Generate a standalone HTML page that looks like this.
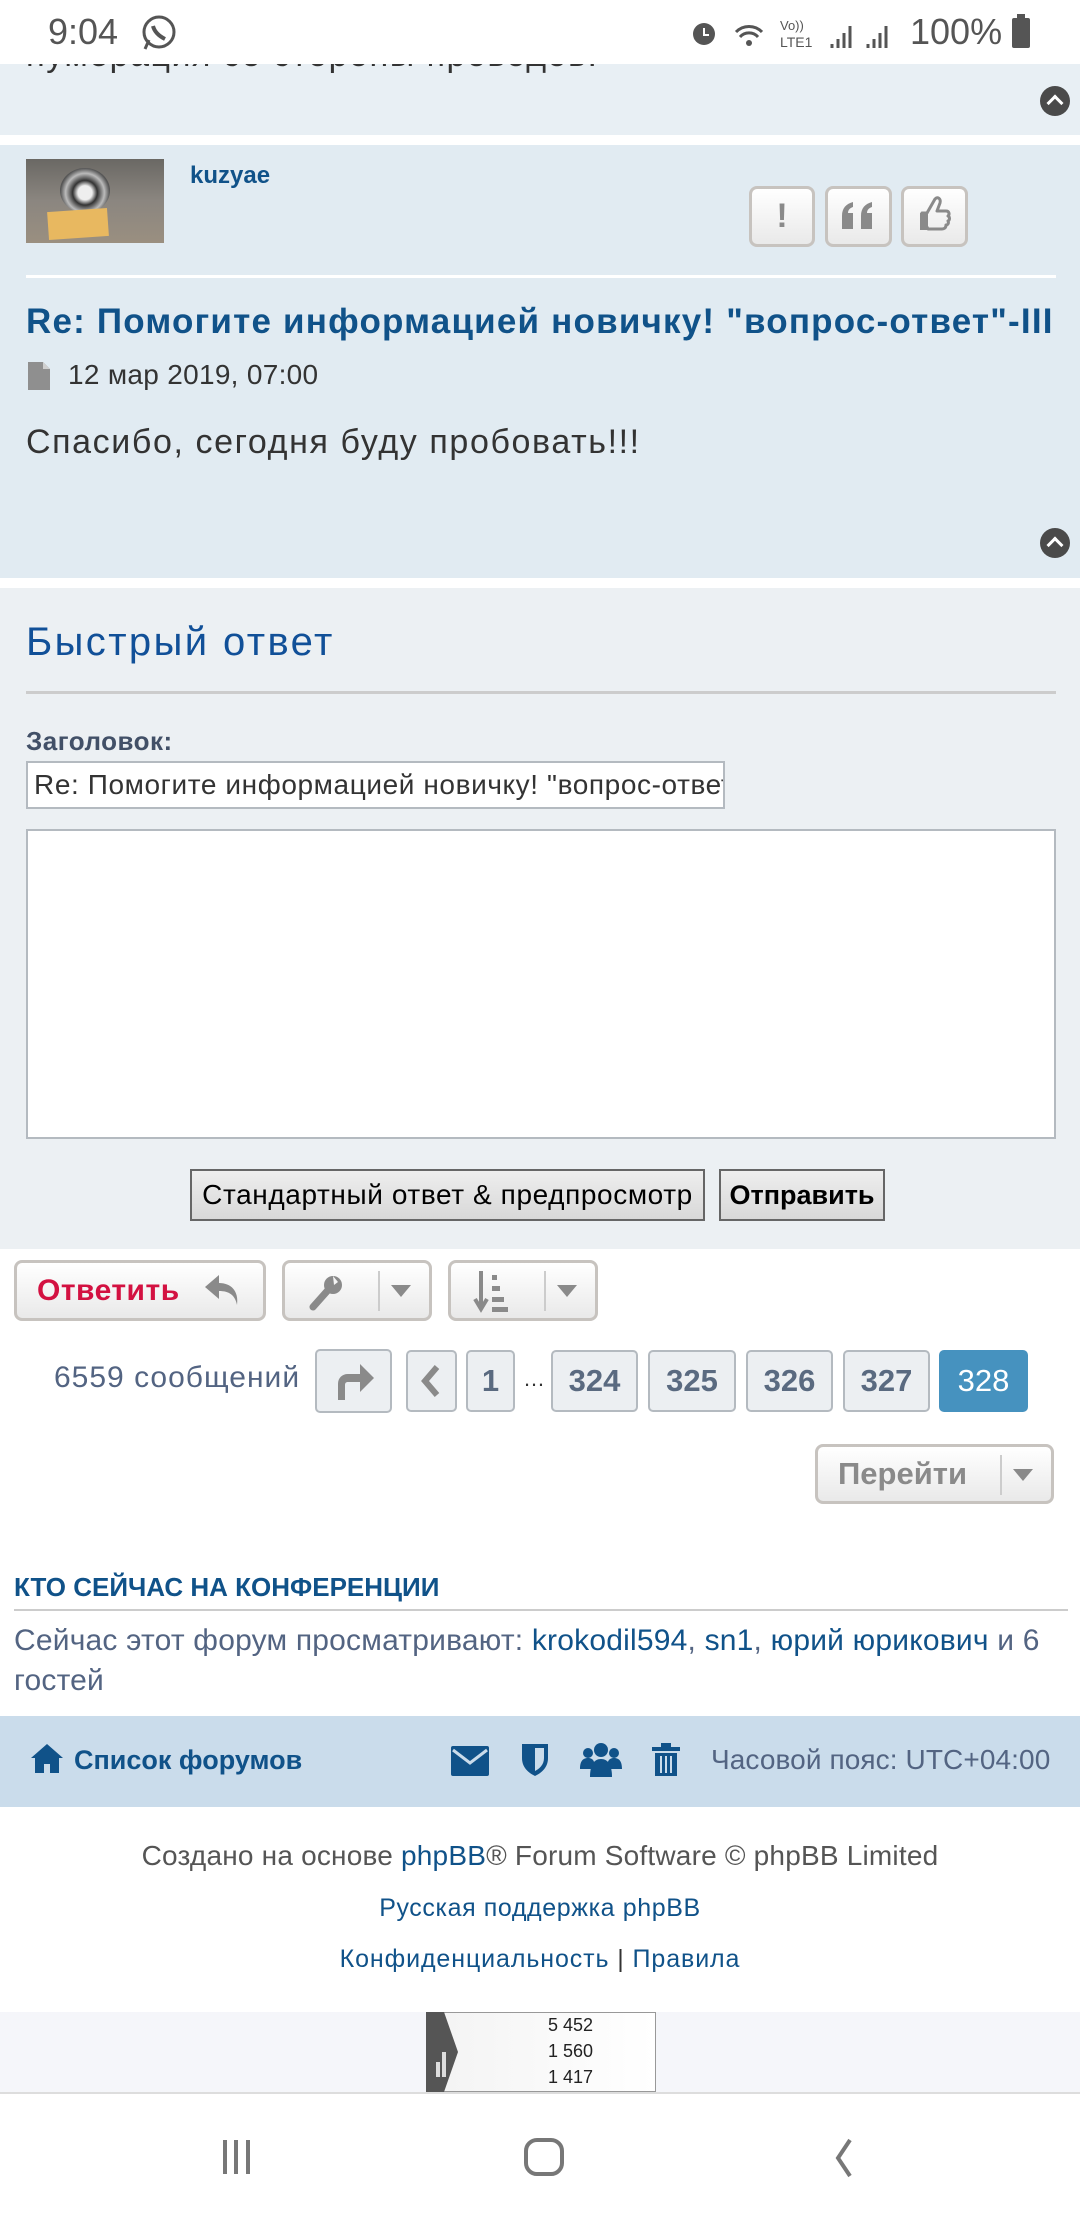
<!DOCTYPE html>
<html><head><meta charset="utf-8"><style>
*{margin:0;padding:0;box-sizing:border-box}
body{width:1080px;height:2220px;position:relative;background:#fff;font-family:"Liberation Sans",Arial,sans-serif;overflow:hidden}
.a{position:absolute;white-space:nowrap}
.btn{position:absolute;border:3px solid #c7c3bf;border-radius:8px;background:linear-gradient(#fff,#e9e9e9);}
.pg{position:absolute;top:1350px;height:62px;border:2px solid #b4bac0;border-radius:5px;background:#eceff2;color:#5a6a80;font-weight:bold;font-size:31px;text-align:center;line-height:58px}
.up{position:absolute;width:30px;height:30px;border-radius:50%;background:#4a4a4a}
.up:after{content:"";position:absolute;left:9px;top:11px;width:9px;height:9px;border-left:3px solid #fff;border-top:3px solid #fff;transform:rotate(45deg)}
</style></head><body>
<div class="a" style="left:0;top:0;width:1080px;height:64px;background:#fff"></div>
<div class="a" style="left:48px;top:11px;font-size:36px;color:#555">9:04</div>
<svg class="a" style="left:140px;top:14px" width="38" height="38" viewBox="0 0 38 38"><circle cx="19" cy="18" r="15" fill="none" stroke="#555" stroke-width="3"/><path d="M5 35 L9 26" stroke="#555" stroke-width="3"/><path d="M13 12 q2 8 12 13" stroke="#555" stroke-width="4" fill="none"/></svg>
<svg class="a" style="left:686px;top:14px" width="340" height="38" viewBox="0 0 340 38"><circle cx="18" cy="20" r="11" fill="#555"/><path d="M18 14v7h5" stroke="#fff" stroke-width="2" fill="none"/><path d="M50 18a18 18 0 0 1 26 0M54 23a12 12 0 0 1 18 0" stroke="#555" stroke-width="3" fill="none"/><circle cx="63" cy="29" r="3" fill="#555"/><text x="94" y="16" font-size="13" fill="#555" font-family="Liberation Sans">Vo))</text><text x="94" y="33" font-size="14" fill="#555" font-family="Liberation Sans">LTE1</text><path d="M146 34v-4M152 34v-9M158 34v-15M164 34v-22" stroke="#555" stroke-width="3"/><path d="M182 34v-4M188 34v-9M194 34v-15M200 34v-22" stroke="#555" stroke-width="3"/></svg>
<div class="a" style="left:910px;top:11px;font-size:36px;color:#555">100%</div>
<div class="a" style="left:1012px;top:18px;width:18px;height:30px;background:#555;border-radius:2px"></div>
<div class="a" style="left:1017px;top:14px;width:8px;height:5px;background:#555"></div>

<div class="a" style="left:0;top:64px;width:1080px;height:71px;background:#e8eff4;overflow:hidden"><div class="a" style="left:26px;top:-28px;font-size:34px;letter-spacing:1.5px;color:#333">нумерация со стороны проводов.</div></div>
<div class="up" style="left:1040px;top:86px"></div>

<div class="a" style="left:0;top:145px;width:1080px;height:433px;background:#e1ebf2"></div>
<div class="a" style="left:26px;top:159px;width:138px;height:84px;background:linear-gradient(180deg,#6a6864,#8b8680 50%,#9a8f80)"></div>
<div class="a" style="left:60px;top:168px;width:50px;height:45px;border-radius:50%;background:radial-gradient(circle at 50% 55%,#eee 20%,#333 35%,#bbb 55%,#555 70%)"></div>
<div class="a" style="left:48px;top:210px;width:60px;height:28px;background:#e8b860;transform:rotate(-4deg)"></div>
<div class="a" style="left:190px;top:162px;font-size:24px;font-weight:bold;color:#105289">kuzyae</div>
<div class="btn" style="left:749px;top:186px;width:66px;height:61px"><div style="font-size:34px;font-weight:bold;color:#8a8a8a;text-align:center;line-height:54px">!</div></div>
<div class="btn" style="left:825px;top:186px;width:67px;height:61px"><svg width="61" height="55" viewBox="0 0 61 55"><path d="M14 40V27c0-8 4-12 11-14v5c-3 1-5 3-5 6h5v16zM33 40V27c0-8 4-12 11-14v5c-3 1-5 3-5 6h5v16z" fill="#8a8a8a"/></svg></div>
<div class="btn" style="left:901px;top:186px;width:67px;height:61px"><svg width="61" height="55" viewBox="0 0 61 55"><path d="M18 24h5l8-14c3-3 6 0 5 4l-3 8h9c3 0 4 3 2 5 2 1 2 4 0 5 1 2 0 4-2 4 0 3-2 4-4 4H24l-1-2h-5z" fill="none" stroke="#8a8a8a" stroke-width="3" stroke-linejoin="round"/><rect x="16" y="24" width="8" height="17" fill="#8a8a8a"/></svg></div>
<div class="a" style="left:26px;top:275px;width:1030px;height:3px;background:#fff"></div>
<div class="a" style="left:26px;top:302px;font-size:35px;font-weight:bold;color:#105289;letter-spacing:1.2px">Re: Помогите информацией новичку! "вопрос-ответ"-III</div>
<svg class="a" style="left:28px;top:362px" width="24" height="28" viewBox="0 0 24 28"><path d="M0 0h15l7 7v21H0z" fill="#8f8f8f"/><path d="M15 0v7h7" fill="#cfcfcf"/></svg>
<div class="a" style="left:68px;top:359px;font-size:28px;color:#333;letter-spacing:0.3px">12 мар 2019, 07:00</div>
<div class="a" style="left:26px;top:423px;font-size:34px;color:#333;letter-spacing:1.6px">Спасибо, сегодня буду пробовать!!!</div>
<div class="up" style="left:1040px;top:528px"></div>

<div class="a" style="left:0;top:588px;width:1080px;height:661px;background:#ecf0f3"></div>
<div class="a" style="left:26px;top:620px;font-size:40px;color:#115098;letter-spacing:2.4px">Быстрый ответ</div>
<div class="a" style="left:26px;top:691px;width:1030px;height:3px;background:#ccc"></div>
<div class="a" style="left:26px;top:726px;font-size:26px;font-weight:bold;color:#425067;letter-spacing:0.5px">Заголовок:</div>
<div class="a" style="left:26px;top:761px;width:699px;height:48px;background:#fff;border:2px solid #b4bac0;overflow:hidden;font-size:28px;color:#333;padding:6px 6px;letter-spacing:0.6px">Re: Помогите информацией новичку! "вопрос-ответ"-III</div>
<div class="a" style="left:26px;top:829px;width:1030px;height:310px;background:#fff;border:2px solid #b4bac0"></div>
<div class="a" style="left:190px;top:1169px;width:515px;height:52px;background:linear-gradient(#eee,#d8d8d8);border:2px solid #666;font-size:28px;color:#000;text-align:center;line-height:48px;letter-spacing:0.6px">Стандартный ответ &amp; предпросмотр</div>
<div class="a" style="left:719px;top:1169px;width:166px;height:52px;background:linear-gradient(#eee,#d8d8d8);border:2px solid #666;font-size:27px;font-weight:bold;color:#000;text-align:center;line-height:48px">Отправить</div>

<div class="btn" style="left:14px;top:1260px;width:252px;height:61px"><span class="a" style="left:20px;top:11px;font-size:30px;font-weight:bold;color:#d31141;letter-spacing:0.5px">Ответить</span><svg class="a" style="left:184px;top:6px" width="44" height="44" viewBox="0 0 44 44"><path d="M18 6L4 18l14 12v-8c10 0 16 4 18 14 2-14-6-22-18-22z" fill="#8a8a8a"/></svg></div>
<div class="btn" style="left:282px;top:1260px;width:150px;height:61px"><svg class="a" style="left:20px;top:10px" width="40" height="40" viewBox="0 0 40 40"><path d="M8 34L24 16" stroke="#8a8a8a" stroke-width="7" stroke-linecap="round"/><circle cx="28" cy="12" r="9" fill="#8a8a8a"/><path d="M28 3l5 6-4 3" fill="#f5f5f5"/></svg><div class="a" style="left:93px;top:8px;width:2px;height:40px;background:#ccc"></div><div class="a" style="left:106px;top:22px;border:10px solid transparent;border-top:12px solid #8a8a8a"></div></div>
<div class="btn" style="left:448px;top:1260px;width:150px;height:61px"><svg class="a" style="left:22px;top:6px" width="40" height="46" viewBox="0 0 40 46"><path d="M8 2v36M2 30l6 10 6-10" stroke="#8a8a8a" stroke-width="4" fill="none"/><rect x="19" y="6" width="5" height="5" fill="#8a8a8a"/><rect x="19" y="17" width="8" height="5" fill="#8a8a8a"/><rect x="19" y="28" width="12" height="5" fill="#8a8a8a"/><rect x="19" y="38" width="16" height="5" fill="#8a8a8a"/></svg><div class="a" style="left:93px;top:8px;width:2px;height:40px;background:#ccc"></div><div class="a" style="left:106px;top:22px;border:10px solid transparent;border-top:12px solid #8a8a8a"></div></div>

<div class="a" style="left:54px;top:1361px;font-size:30px;color:#536482;letter-spacing:1px">6559 сообщений</div>
<div class="pg" style="left:315px;width:77px;top:1349px;height:64px"><svg width="60" height="50" viewBox="0 0 60 50" style="margin-top:5px"><path d="M14 44V28c0-6 4-10 10-10h12V8l14 14-14 14V26H24c-2 0-3 1-3 3v15z" fill="#8a8a8a"/></svg></div>
<div class="pg" style="left:406px;width:51px"><svg width="30" height="40" viewBox="0 0 30 40" style="margin-top:9px"><path d="M20 6L8 20l12 14" stroke="#8a8a8a" stroke-width="6" fill="none"/></svg></div>
<div class="pg" style="left:466px;width:49px">1</div>
<div class="a" style="left:523px;top:1366px;font-size:22px;color:#333">…</div>
<div class="pg" style="left:551px;width:87px">324</div>
<div class="pg" style="left:648px;width:88px">325</div>
<div class="pg" style="left:746px;width:87px">326</div>
<div class="pg" style="left:843px;width:87px">327</div>
<div class="pg" style="left:939px;width:89px;background:#4692bf;border-color:#4692bf;color:#fff;font-weight:normal">328</div>

<div class="btn" style="left:815px;top:1444px;width:239px;height:60px"><span class="a" style="left:20px;top:9px;font-size:31px;font-weight:bold;color:#8a8a8a">Перейти</span><div class="a" style="left:182px;top:8px;width:2px;height:40px;background:#ccc"></div><div class="a" style="left:195px;top:22px;border:10px solid transparent;border-top:12px solid #8a8a8a"></div></div>

<div class="a" style="left:14px;top:1572px;font-size:26px;font-weight:bold;color:#105289">КТО СЕЙЧАС НА КОНФЕРЕНЦИИ</div>
<div class="a" style="left:14px;top:1609px;width:1054px;height:2px;background:#ccc"></div>
<div class="a" style="left:14px;top:1621px;font-size:30px;color:#536482;line-height:40px;letter-spacing:0.2px">Сейчас этот форум просматривают: <span style="color:#105289">krokodil594</span>, <span style="color:#105289">sn1</span>, <span style="color:#105289">юрий юрикович</span> и 6<br>гостей</div>

<div class="a" style="left:0;top:1716px;width:1080px;height:91px;background:#cadceb"></div>
<svg class="a" style="left:30px;top:1742px" width="34" height="32" viewBox="0 0 34 32"><path d="M17 2L1 16h4v15h9v-9h6v9h9V16h4z" fill="#105289"/></svg>
<div class="a" style="left:74px;top:1745px;font-size:27px;font-weight:bold;color:#105289">Список форумов</div>
<svg class="a" style="left:451px;top:1746px" width="38" height="30" viewBox="0 0 38 30"><rect x="0" y="0" width="38" height="30" rx="2" fill="#105289"/><path d="M2 4l17 13L36 4" stroke="#cadceb" stroke-width="3" fill="none"/></svg>
<svg class="a" style="left:521px;top:1743px" width="28" height="34" viewBox="0 0 28 34"><path d="M1 1h26v14c0 10-7 15-13 18C8 30 1 25 1 15z" fill="#105289"/><path d="M14 5h9v10c0 7-5 11-9 13z" fill="#cadceb"/></svg>
<svg class="a" style="left:580px;top:1741px" width="42" height="36" viewBox="0 0 42 36"><circle cx="21" cy="9" r="7" fill="#105289"/><circle cx="8" cy="12" r="5" fill="#105289"/><circle cx="34" cy="12" r="5" fill="#105289"/><path d="M10 36c0-12 4-18 11-18s11 6 11 18z" fill="#105289"/><path d="M0 28c0-8 3-11 8-11s7 3 7 11zM27 28c0-8 2-11 7-11s8 3 8 11z" fill="#105289"/></svg>
<svg class="a" style="left:652px;top:1742px" width="28" height="36" viewBox="0 0 28 36"><rect x="0" y="5" width="28" height="4" fill="#105289"/><rect x="9" y="1" width="10" height="5" fill="#105289"/><path d="M3 11h22v23H3z" fill="#105289"/><path d="M9 14v17M14 14v17M19 14v17" stroke="#cadceb" stroke-width="2"/></svg>
<div class="a" style="left:711px;top:1744px;font-size:28px;color:#536482;letter-spacing:0.1px">Часовой пояс: UTC+04:00</div>

<div class="a" style="left:0;top:1840px;width:1080px;text-align:center;font-size:28px;color:#555;letter-spacing:0.2px">Создано на основе <span style="color:#105289">phpBB</span>® Forum Software © phpBB Limited</div>
<div class="a" style="left:0;top:1894px;width:1080px;text-align:center;font-size:25px;color:#105289;letter-spacing:0.6px">Русская поддержка phpBB</div>
<div class="a" style="left:0;top:1945px;width:1080px;text-align:center;font-size:25px;color:#105289;letter-spacing:0.9px">Конфиденциальность <span style="color:#333">|</span> Правила</div>

<div class="a" style="left:0;top:2012px;width:1080px;height:80px;background:#f5f6fa"></div>
<div class="a" style="left:426px;top:2012px;width:230px;height:80px;background:linear-gradient(90deg,#f3f3f3,#fff);border:1px solid #999"></div>
<svg class="a" style="left:426px;top:2012px" width="60" height="80" viewBox="0 0 60 80"><path d="M0 0h18l14 40-14 40H0z" fill="#555"/><rect x="10" y="50" width="4" height="15" fill="#ddd"/><rect x="16" y="40" width="4" height="25" fill="#ddd"/></svg>
<div class="a" style="left:548px;top:2012px;font-size:18px;line-height:26px;color:#222;text-align:right">5 452<br>1 560<br>1 417</div>
<div class="a" style="left:0;top:2092px;width:1080px;height:2px;background:#ddd"></div>

<div class="a" style="left:223px;top:2140px;width:4px;height:34px;background:#777"></div>
<div class="a" style="left:234px;top:2140px;width:4px;height:34px;background:#777"></div>
<div class="a" style="left:246px;top:2140px;width:4px;height:34px;background:#777"></div>
<div class="a" style="left:524px;top:2138px;width:40px;height:38px;border:4px solid #777;border-radius:13px"></div>
<svg class="a" style="left:832px;top:2138px" width="24" height="40" viewBox="0 0 24 40"><path d="M18 2L6 20l12 18" stroke="#777" stroke-width="4" fill="none"/></svg>
</body></html>
